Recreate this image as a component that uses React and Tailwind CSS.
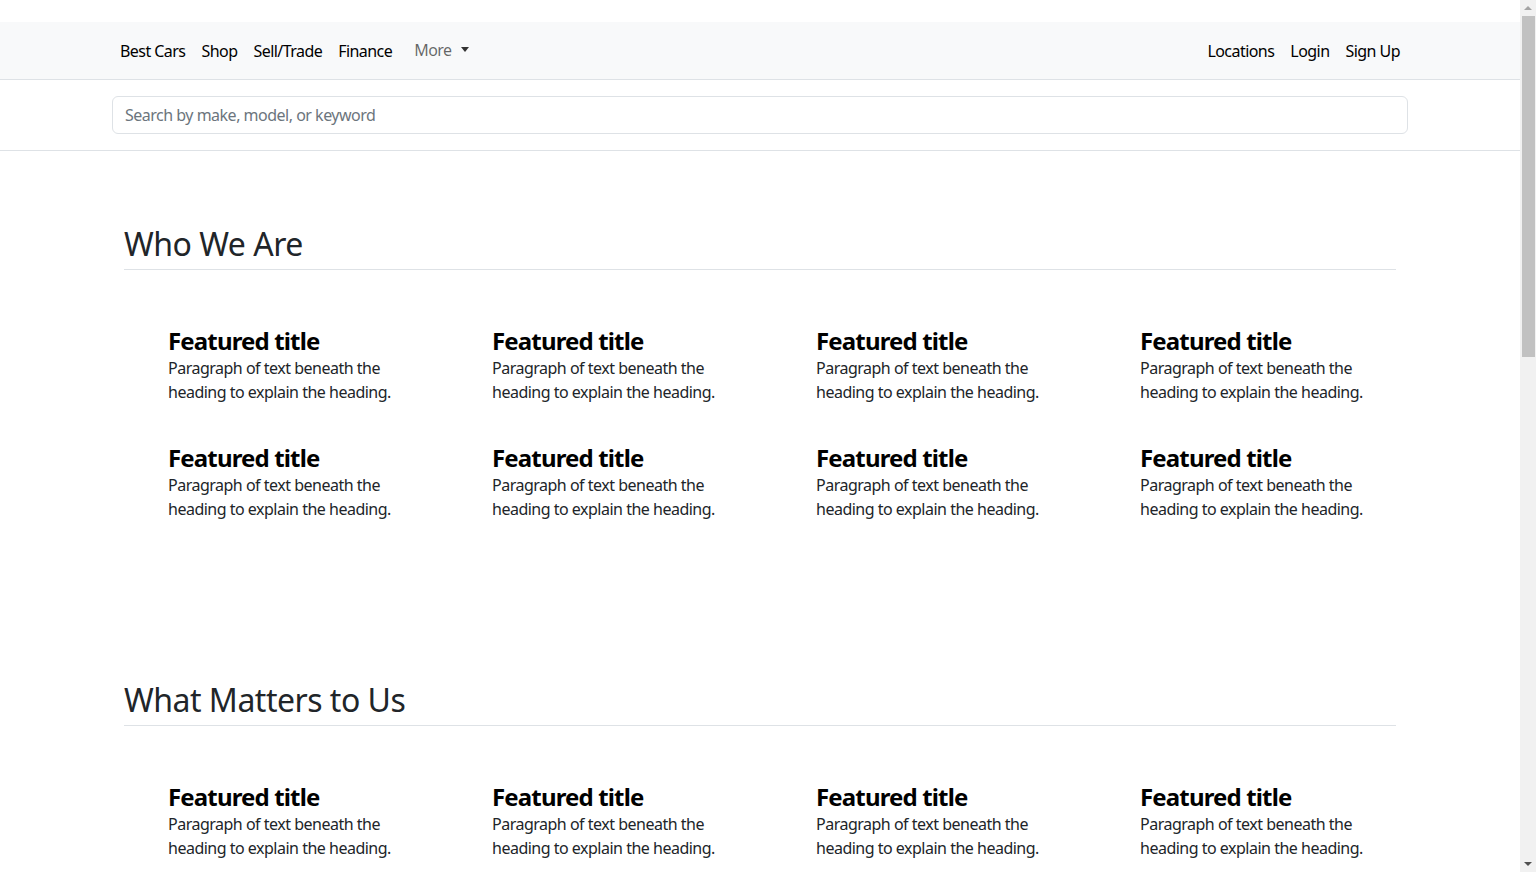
const whoItems = Array.from({ length: 8 })
const matterItems = Array.from({ length: 4 })

function Feature() {
  return (
    <div className="pl-[56px]">
      <h4 className="text-[24px] leading-[1.2] font-bold tracking-[-0.85px] text-black">Featured title</h4>
      <p className="max-w-[256px] text-[16px] leading-6 tracking-[-0.5px] text-[#212529]">
        Paragraph of text beneath the heading to explain the heading.
      </p>
    </div>
  )
}

function Section({ title, items, className = '' }) {
  return (
    <section className={'py-12 ' + className}>
      <div className="px-3">
        <h2 className="pb-[6px] border-b border-[#dee2e6] text-[32px] leading-[1.2] font-normal tracking-[-0.5px] text-[#212529]">
          {title}
        </h2>
      </div>
      <div className="grid grid-cols-4 gap-y-[40px] pt-[57px]">
        {items.map((_, i) => (
          <Feature key={i} />
        ))}
      </div>
    </section>
  )
}

export default function App() {
  return (
    <div
      className="h-[872px] w-full flex overflow-hidden bg-white text-[#212529]"
      style={{ fontFamily: '"Noto Sans", "Open Sans", sans-serif' }}
    >
      <div className="flex-1 flex flex-col min-w-0">
        {/* top strip */}
        <div className="h-[22px] shrink-0" />

        {/* Navbar */}
        <nav className="shrink-0 h-[58px] bg-[#f8f9fa] border-b border-[#dee2e6] flex items-center">
          <div className="w-[1296px] mx-auto flex items-center justify-between text-[16px] leading-6 tracking-[-0.55px]">
            <ul className="flex items-center">
              <li className="px-2 text-black">Best Cars</li>
              <li className="px-2 text-black">Shop</li>
              <li className="px-2 text-black">Sell/Trade</li>
              <li className="px-2 text-black">Finance</li>
              <li className="ml-[6px] px-2 flex items-center text-black/60 -translate-y-px">
                More
                <span className="ml-[9px] w-0 h-0 border-x-[4px] border-x-transparent border-t-[5px] border-t-[#333]" />
              </li>
            </ul>
            <ul className="flex items-center">
              <li className="px-2 text-black">Locations</li>
              <li className="px-2 text-black">Login</li>
              <li className="px-2 text-black">Sign Up</li>
            </ul>
          </div>
        </nav>

        {/* Search */}
        <div className="shrink-0 py-4 border-b border-[#dee2e6]">
          <div className="w-[1296px] mx-auto">
            <input
              type="text"
              placeholder="Search by make, model, or keyword"
              className="w-full h-[38px] px-3 rounded-md border border-[#dee2e6] text-[16px] tracking-[-0.5px] outline-none placeholder:text-[#6c757d]"
            />
          </div>
        </div>

        {/* Content */}
        <main className="w-[1296px] mx-auto mt-[26px]">
          <Section title="Who We Are" items={whoItems} />
          <Section title="What Matters to Us" items={matterItems} className="mt-[64px]" />
        </main>
      </div>

      {/* Scrollbar */}
      <div className="w-4 shrink-0 bg-[#f1f1f1] flex flex-col items-center">
        <div className="h-4 w-full flex items-center justify-center">
          <span className="w-0 h-0 border-x-[4px] border-x-transparent border-b-[4px] border-b-[#a3a3a3]" />
        </div>
        <div className="w-[13px] h-[341px] bg-[#c1c1c1]" />
        <div className="flex-1" />
        <div className="h-4 w-full flex items-center justify-center">
          <span className="w-0 h-0 border-x-[4px] border-x-transparent border-t-[4px] border-t-[#505050]" />
        </div>
      </div>
    </div>
  )
}
